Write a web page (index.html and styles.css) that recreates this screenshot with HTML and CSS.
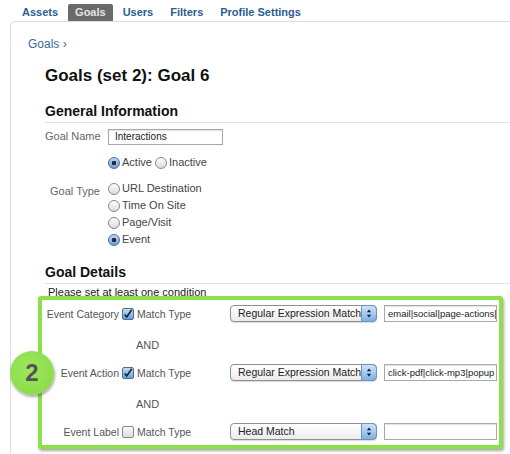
FILE: index.html
```html
<!DOCTYPE html>
<html lang="en">
<head>
    <meta charset="UTF-8">
    <title>Goals (set 2): Goal 6</title>
    <link rel="stylesheet" href="styles.css">
</head>
<body>
    <div class="tabs">
        <span class="tab">Assets</span>
        <span class="tab active">Goals</span>
        <span class="tab">Users</span>
        <span class="tab">Filters</span>
        <span class="tab">Profile Settings</span>
    </div>

    <div class="panel">
        <div class="crumb">Goals ›</div>

        <div class="main">
            <h1>Goals (set 2): Goal 6</h1>

            <!-- Informacao geral -->
            <h2>General Information</h2>
            <div class="field">
                <span class="label">Goal Name</span>
                <span class="textbox name">Interactions</span>
            </div>
            <div class="field status">
                <span class="label"></span>
                <span class="opts inline">
                    <span class="opt"><i class="radio on"></i>Active</span>
                    <span class="opt"><i class="radio"></i>Inactive</span>
                </span>
            </div>
            <div class="field type">
                <span class="label">Goal Type</span>
                <span class="opts">
                    <span class="opt"><i class="radio"></i>URL Destination</span>
                    <span class="opt"><i class="radio"></i>Time On Site</span>
                    <span class="opt"><i class="radio"></i>Page/Visit</span>
                    <span class="opt"><i class="radio on"></i>Event</span>
                </span>
            </div>

            <!-- Detalhes -->
            <h2 class="details">Goal Details</h2>
            <div class="hint">Please set at least one condition</div>

            <div class="conditions">
                <div class="badge">2</div>

                <div class="cond">
                    <span class="clabel">Event Category</span>
                    <i class="check on"></i>
                    <span class="mt">Match Type</span>
                    <span class="select">Regular Expression Match<b class="arrows"></b></span>
                    <span class="textbox val">email|social|page-actions|</span>
                </div>
                <div class="and">AND</div>
                <div class="cond">
                    <span class="clabel">Event Action</span>
                    <i class="check on"></i>
                    <span class="mt">Match Type</span>
                    <span class="select">Regular Expression Match<b class="arrows"></b></span>
                    <span class="textbox val">click-pdf|click-mp3|popup</span>
                </div>
                <div class="and">AND</div>
                <div class="cond">
                    <span class="clabel">Event Label</span>
                    <i class="check"></i>
                    <span class="mt">Match Type</span>
                    <span class="select">Head Match<b class="arrows"></b></span>
                    <span class="textbox val"></span>
                </div>
            </div>
        </div>
    </div>
</body>
</html>
```

FILE: styles.css
```css
/* Geral */
body {
    margin: 0;
    font-family: "Liberation Sans", Arial, sans-serif;
    background: #fff;
    color: #222;
    overflow: hidden;
    height: 454px;
}

/* Abas */
.tabs {
    display: flex;
    gap: 3px;
    padding: 4px 0 0 15px;
}

.tab {
    padding: 0 7px;
    line-height: 17px;
    font-size: 11px;
    font-weight: bold;
    color: #2b5d8f;
    border-radius: 2px 2px 0 0;
}

.tab.active {
    background: #6a6a6a;
    color: #e4e4e4;
}

/* Painel */
.panel {
    margin-left: 10px;
    border: 1px solid #dcdcdc;
    border-right: none;
    border-bottom: none;
    border-radius: 5px 0 0 0;
    height: 432px;
}

.crumb {
    padding: 14px 0 0 17px;
    line-height: 16px;
    font-size: 12px;
    color: #3a6a9c;
}

.main {
    padding-left: 34px;
}

h1 {
    margin: 13px 0 0;
    font-size: 17px;
    line-height: 22px;
    color: #111;
}

h2 {
    margin: 15px 0 0;
    padding-bottom: 2px;
    font-size: 14px;
    line-height: 18px;
    color: #111;
    border-bottom: 1px solid #e2e2e2;
}

/* Campos */
.field {
    display: flex;
    gap: 8px;
    margin-top: 5px;
    font-size: 11px;
}

.field.status,
.field.type {
    margin-top: 9px;
}

.label {
    flex: none;
    width: 55px;
    text-align: right;
    white-space: nowrap;
    color: #666;
    line-height: 17px;
}

.field.type .label {
    padding-top: 3px;
}

.textbox {
    display: block;
    flex: none;
    box-sizing: border-box;
    height: 16px;
    padding: 0 4px;
    border: 1px solid #a9a9a9;
    box-shadow: inset 0 1px 1px rgba(0, 0, 0, 0.12);
    background: #fff;
    font-size: 10px;
    line-height: 14px;
    color: #222;
    white-space: nowrap;
    overflow: hidden;
}

.textbox.name {
    width: 115px;
    margin-top: 1px;
    padding-left: 6px;
}

.opts {
    display: flex;
    flex-direction: column;
}

.opts.inline {
    flex-direction: row;
    gap: 3px;
}

.opt {
    display: flex;
    align-items: center;
    gap: 2px;
    line-height: 17px;
    color: #444;
    font-size: 11px;
}

/* Radio e checkbox */
.radio {
    display: inline-block;
    box-sizing: border-box;
    width: 12px;
    height: 12px;
    border-radius: 50%;
    border: 1px solid #8a8a8a;
    background: linear-gradient(#fdfdfd, #dcdcdc);
}

.radio.on {
    border-color: #4c6f99;
    background: radial-gradient(circle, #1d2a3a 0 2px, transparent 2.5px),
                linear-gradient(#bcd6f3, #6b9fd9);
}

.hint {
    margin: 1px 0 0 3px;
    font-size: 11px;
    line-height: 14px;
    color: #222;
}

/* Condicoes */
.conditions {
    position: relative;
    margin: -3px 0 0 -7px;
    width: 465px;
    box-sizing: border-box;
    padding: 5px 0 5px;
    border: 4px solid #8de04a;
    border-radius: 3px;
    background: #fff;
    box-shadow: 1px 2px 3px rgba(0, 0, 0, 0.35);
}

.badge {
    position: absolute;
    left: -32px;
    top: 51px;
    width: 44px;
    height: 44px;
    border-radius: 50%;
    background: radial-gradient(circle at 45% 40%, #9de85e, #86d843);
    box-shadow: 1px 2px 3px rgba(0, 0, 0, 0.35);
    color: #555;
    font-size: 24px;
    font-weight: bold;
    line-height: 44px;
    text-align: center;
}

.cond {
    display: flex;
    align-items: center;
    height: 17px;
    font-size: 10.5px;
    color: #555;
}

.clabel {
    flex: none;
    width: 77px;
    text-align: right;
    white-space: nowrap;
    margin-right: 3px;
}

.check {
    flex: none;
    display: inline-block;
    box-sizing: border-box;
    width: 12px;
    height: 12px;
    border: 1px solid #888;
    border-radius: 2px;
    background: linear-gradient(#fafafa, #dedede);
    margin-right: 3px;
}

.check.on {
    border-color: #4c6f99;
    background:
        url("data:image/svg+xml,%3Csvg xmlns='http://www.w3.org/2000/svg' viewBox='0 0 12 12'%3E%3Cpath d='M2 6.5 L4.5 9.5 L10.5 1' fill='none' stroke='%23152335' stroke-width='2'/%3E%3C/svg%3E") center/10px no-repeat,
        linear-gradient(#c3dbf4, #6a9ed8);
}

.mt {
    flex: none;
    width: 93px;
    white-space: nowrap;
}

.select {
    flex: none;
    position: relative;
    box-sizing: border-box;
    width: 147px;
    height: 17px;
    padding-left: 7px;
    border: 1px solid #8f8f8f;
    border-radius: 4px;
    background: linear-gradient(#ffffff, #ececec);
    box-shadow: 0 1px 1px rgba(0, 0, 0, 0.15);
    font-size: 10.5px;
    line-height: 15px;
    color: #222;
    white-space: nowrap;
}

.arrows {
    position: absolute;
    right: -1px;
    top: -1px;
    width: 16px;
    height: 17px;
    box-sizing: border-box;
    border: 1px solid #6f93c0;
    border-radius: 0 5px 5px 0;
    background:
        url("data:image/svg+xml,%3Csvg xmlns='http://www.w3.org/2000/svg' viewBox='0 0 16 17'%3E%3Cpath d='M5.5 7 L8 4 L10.5 7 Z M5.5 10 L8 13 L10.5 10 Z' fill='%23102030'/%3E%3C/svg%3E") center/14px no-repeat,
        linear-gradient(#cfe2f8, #7fb0e6);
}

.textbox.val {
    width: 113px;
    height: 17px;
    margin-left: 7px;
    line-height: 15px;
    padding-left: 3px;
    font-size: 9.5px;
}

.and {
    margin: 16px 0 0 94px;
    font-size: 11px;
    line-height: 14px;
    color: #555;
}

.and + .cond {
    margin-top: 12px;
}
```
